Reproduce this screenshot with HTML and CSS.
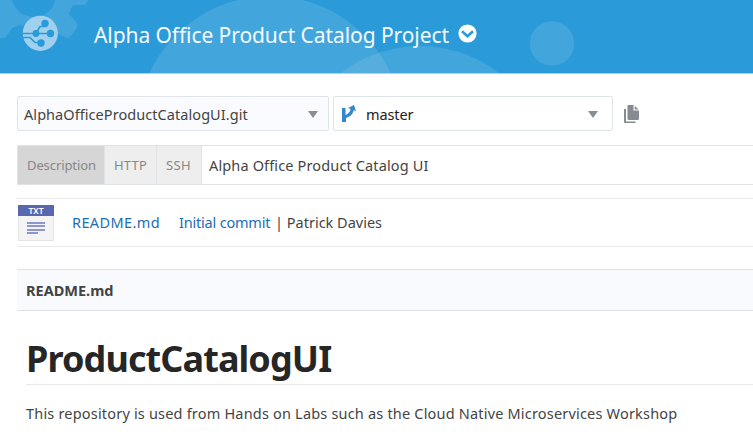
FILE: index.html
```html
<!DOCTYPE html>
<html lang="en">
<head>
<meta charset="utf-8">
<title>Alpha Office Product Catalog Project</title>
<link rel="stylesheet" href="styles.css">
</head>
<body>
<header class="banner">
  <svg class="banner-art" width="753" height="73" viewBox="0 0 753 73" aria-hidden="true">
    <g fill="#fff" fill-opacity=".11">
      <path fill-rule="evenodd" d="M0 0H89L85 5H73L69 14L77 23Q78 27 76 29L71 36Q68 39 65 37L55 32L20 25L12 28L5 38H0ZM12 0Q17 16 34 17Q51 16 55 0Z"/>
      <circle cx="270" cy="129" r="133"/>
      <circle cx="420" cy="175" r="129"/>
      <circle cx="552" cy="43.5" r="22.3"/>
    </g>
  </svg>
  <svg class="logo" width="36" height="36" viewBox="0 0 36 36" aria-hidden="true">
    <circle cx="18.3" cy="18.3" r="17.6" fill="#9fd0ee"/>
    <g fill="none" stroke="#2b9ad8" stroke-width="1.7">
      <path d="M0 18.5H28M0 22.5H8L13 27.5H19M14 18L18 11.5H22"/>
    </g>
    <g fill="#2b9ad8"><circle cx="14" cy="18.5" r="3.4"/><circle cx="28.5" cy="18.5" r="3.7"/><circle cx="23" cy="8.5" r="3.7"/><circle cx="19" cy="28" r="3.7"/></g>
  </svg>
  <h1 class="project">Alpha Office Product Catalog Project</h1>
  <svg class="chevron" width="19" height="19" viewBox="0 0 19 19" aria-hidden="true"><circle cx="9.5" cy="9.5" r="9.1" fill="#fff"/><path d="M4 7.3L9.5 12.3L15 7.3" fill="none" stroke="#2b9ad8" stroke-width="2.6"/></svg>
</header>
<main class="content">
  <div class="pickers">
    <div class="select repo"><span class="repo-name">AlphaOfficeProductCatalogUI.git</span><i class="arrow"></i></div>
    <div class="select branch">
      <svg width="15" height="18" viewBox="0 0 15 18" aria-hidden="true"><path d="M0 3H3.5V10Q8.5 7.5 8.5 4L6 3L12 0L14 6.5L11.7 5Q11.5 10 4 13V17H0Z" fill="#3288cb"/></svg>
      <span class="branch-name">master</span><i class="arrow"></i>
    </div>
    <svg class="copy" width="15" height="19" viewBox="0 0 15 19" aria-hidden="true"><path d="M0 4H2V16.5H11.5V18H1Q0 18 0 17ZM4.5 0H9.5V5.5H15V13.5Q15 15 13.5 15H5Q3.5 15 3.5 13.5V1Q3.5 0 4.5 0ZM10.7 0.8L14.5 4.5H10.7Z" fill="#858b90"/></svg>
  </div>
  <div class="address">
    <span class="tab active">Description</span><span class="tab http">HTTP</span><span class="tab ssh">SSH</span><span class="summary">Alpha Office Product Catalog UI</span>
  </div>
  <div class="file">
    <div class="file-icon"><span class="ext">TXT</span><i class="rule"></i><i class="rule"></i><i class="rule"></i><i class="rule short"></i></div>
    <a class="file-name">README.md</a>
    <a class="commit">Initial commit</a>
    <span class="author">| Patrick Davies</span>
  </div>
  <section class="readme">
    <div class="readme-bar">README.md</div>
    <h2 class="title">ProductCatalogUI</h2>
    <p class="text">This repository is used from Hands on Labs such as the Cloud Native Microservices Workshop</p>
  </section>
</main>
</body>
</html>
```
FILE: styles.css
```css
* { box-sizing: border-box; }
body { margin: 0; width: 753px; height: 445px; overflow: hidden; background: #fff; color: #444; font: 14.5px/20px "Noto Sans", sans-serif; }
.banner { position: relative; display: flex; align-items: flex-start; height: 74px; background: #2b9ad8; border-bottom: 1px solid #a8d6ef; }
.banner-art { position: absolute; left: 0; top: 0; }
.logo { position: relative; margin: 15px 0 0 22px; }
.project { position: relative; margin: 20px 0 0 36px; width: 364px; font-size: 21px; line-height: 30px; font-weight: 400; letter-spacing: -.08px; color: #f4faff; white-space: nowrap; }
.chevron { position: relative; margin-top: 24px; }
.content { padding: 22px 0 0 17px; }
.pickers { display: flex; align-items: flex-start; }
.select { display: flex; align-items: center; height: 35px; border: 1px solid #dfe4e7; border-radius: 2px; white-space: nowrap; }
.repo { width: 312px; padding: 0 10px 0 6px; background: #fafbfe; letter-spacing: .06px; }
.branch { width: 280px; margin-left: 4px; padding: 0 14px 0 8px; color: #222; }
.branch-name { margin-left: 9px; letter-spacing: -.1px; }
.arrow { margin: 2px 0 0 auto; border: 5px solid transparent; border-top: 7px solid #888e93; border-bottom: 0; }
.copy { margin: 9px 0 0 11px; }
.address { display: flex; height: 40px; margin-top: 14px; border: 1px solid #e0e4e7; border-right: 0; line-height: 38px; white-space: nowrap; }
.tab { width: 87px; padding-left: 9px; background: #eee; color: #888; border-right: 1px solid #dfe3e6; font-size: 13px; letter-spacing: -.1px; }
.active { background: #d6d6d6; }
.http { width: 52px; letter-spacing: .2px; }
.ssh { width: 45px; letter-spacing: .4px; }
.summary { margin-left: 7px; letter-spacing: .14px; }
.file { display: flex; height: 49px; margin-top: 13px; border-top: 1px solid #eaebec; border-bottom: 1px solid #eaebec; line-height: 47px; white-space: nowrap; }
.file-icon { width: 36px; height: 36px; margin: 6px 0 0 1px; background: #f4f4f4; border: 1px solid #e4e4e6; border-top: 0; }
.ext { display: block; height: 11px; margin: 0 -1px 6px; background: #5968ae; color: #fff; font: 600 8.5px/11px "Noto Sans", sans-serif; text-align: center; }
.rule { display: block; width: 18px; height: 2px; margin: 0 0 1.4px 8px; background: #8e97cf; }
.short { width: 11px; }
.file-name { width: 107px; margin-left: 18px; color: #1c6db5; letter-spacing: .38px; }
.commit { width: 96px; color: #1c6db5; letter-spacing: -.2px; }
.readme { margin-top: 22px; }
.readme-bar { height: 42px; border-top: 1px solid #dce1e6; border-bottom: 1px solid #dce1e6; padding-left: 9px; background: #f9fafe; font-weight: 700; line-height: 41px; }
.title { height: 74px; margin: 0 0 0 9px; border-bottom: 1px solid #e9e9e9; color: #262626; font-size: 36px; line-height: 96px; font-weight: 700; letter-spacing: -.9px; }
.text { margin: 18px 0 0 9px; letter-spacing: .19px; white-space: nowrap; }
```
